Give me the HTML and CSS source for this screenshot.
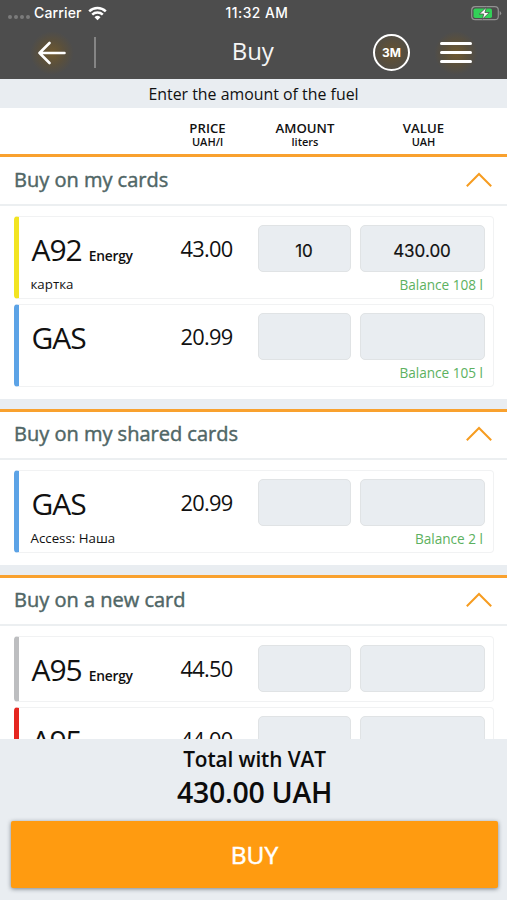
FILE: index.html
```
<!DOCTYPE html>
<html lang="en">
<head>
<meta charset="utf-8">
<title>Buy</title>
<link rel="stylesheet" href="styles.css">
</head>
<body>
<div class="app">
  <header class="top">
    <div class="status">
      <div class="status-left">
        <span class="dots"><i></i><i></i><i></i><i></i></span>
        <span class="carrier">Carrier</span>
        <svg class="wifi" width="19" height="15" viewBox="0 0 19 15" fill="none" stroke="#fff" stroke-width="2.5"><path d="M1.2 5.3a12 12 0 0 1 16.600 0M4.200 8.700a7.700 7.700 0 0 1 10.600 0"/><path d="M9.500 14.200 6.500 11.300a4.300 4.300 0 0 1 6 0z" fill="#fff" stroke="none"/></svg>
      </div>
      <span class="clock">11:32 AM</span>
      <svg class="battery" width="31" height="15" viewBox="0 0 31 15"><rect x=".7" y=".7" width="26.600" height="13" rx="3.500" fill="none" stroke="#929292" stroke-width="1.200"/><rect x="2.500" y="2.500" width="18.500" height="9.500" rx="1.800" fill="#32d158"/><path d="M28.700 5v4.500q1.500-.7 1.500-2.200T28.700 5" fill="#929292"/><path d="M15.500 1.200 8.300 8h4.500l-1.500 5.300L18.300 6.500h-4.400z" fill="#fff" stroke="#4d4d4d" stroke-width=".8"/></svg>
    </div>
    <nav class="bar">
      <div class="back glow"><svg width="28" height="24" viewBox="0 0 28 24" fill="none" stroke="#fff" stroke-width="2.600" stroke-linecap="round" stroke-linejoin="round"><path d="M26.500 12H1.500M11.500 2 1.500 12l10 10"/></svg></div>
      <div class="rule"></div>
      <h1>Buy</h1>
      <div class="badge">3M</div>
      <div class="menu glow"><i></i><i></i><i></i></div>
    </nav>
  </header>
  <div class="hint">Enter the amount of the fuel</div>
  <div class="cols grid">
    <span></span>
    <div>PRICE<small>UAH/l</small></div>
    <div>AMOUNT<small>liters</small></div>
    <div>VALUE<small>UAH</small></div>
  </div>
  <main class="list">
    <section class="group first">
      <div class="group-head"><h2>Buy on my cards</h2><svg class="chev" width="28" height="16" viewBox="0 0 28 16"><path d="M1.800 14.200 14 2l12.200 12.200"/></svg></div>
      <div class="cards">
        <article class="card yellow">
          <div class="grid row"><div class="fuel">A92<b>Energy</b></div><div class="price">43.00</div><div class="field">10</div><div class="field">430.00</div></div>
          <div class="foot"><span>картка</span><span class="balance">Balance 108 l</span></div>
        </article>
        <article class="card blue">
          <div class="grid row"><div class="fuel">GAS</div><div class="price">20.99</div><div class="field"></div><div class="field"></div></div>
          <div class="foot"><span></span><span class="balance">Balance 105 l</span></div>
        </article>
      </div>
    </section>
    <section class="group">
      <div class="group-head"><h2>Buy on my shared cards</h2><svg class="chev" width="28" height="16" viewBox="0 0 28 16"><path d="M1.800 14.200 14 2l12.200 12.200"/></svg></div>
      <div class="cards">
        <article class="card blue">
          <div class="grid row"><div class="fuel">GAS</div><div class="price">20.99</div><div class="field"></div><div class="field"></div></div>
          <div class="foot"><span>Access: Наша</span><span class="balance">Balance 2 l</span></div>
        </article>
      </div>
    </section>
    <section class="group">
      <div class="group-head"><h2>Buy on a new card</h2><svg class="chev" width="28" height="16" viewBox="0 0 28 16"><path d="M1.800 14.200 14 2l12.200 12.200"/></svg></div>
      <div class="cards">
        <article class="card short grey">
          <div class="grid row"><div class="fuel">A95<b>Energy</b></div><div class="price">44.50</div><div class="field"></div><div class="field"></div></div>
        </article>
        <article class="card short red">
          <div class="grid row"><div class="fuel">A95</div><div class="price">44.00</div><div class="field"></div><div class="field"></div></div>
        </article>
      </div>
    </section>
  </main>
  <footer class="total">
    <div class="label">Total with VAT</div>
    <div class="sum">430.00 UAH</div>
    <button class="buy">BUY</button>
  </footer>
</div>
</body>
</html>
```
FILE: styles.css
```
* { box-sizing: border-box; }
body { margin: 0; background: #e9edf1; color: #111; font-family: "Open Sans", "Noto Sans", sans-serif; }
svg { display: block; }
.app { width: 507px; height: 900px; display: flex; flex-direction: column; overflow: hidden; }

.top { height: 79px; flex: none; background: #4d4d4d; color: #fff; }
.status { height: 26px; padding: 0 6px 0 8px; display: grid; grid-template-columns: 1fr auto 1fr; align-items: center; font: 500 14px/26px Inter, sans-serif; }
.status-left { display: flex; align-items: center; }
.dots { display: flex; gap: 2px; margin: 8px 4px 0 0; }
.dots i { width: 4px; height: 4px; border-radius: 50%; background: #7b7b7b; }
.carrier { letter-spacing: .15px; width: 48px; white-space: nowrap; }
.wifi { margin-left: 6px; }
.clock { font-size: 13.8px; letter-spacing: .5px; margin-right: -5px; }
.battery { justify-self: end; margin-right: -1px; }
.bar { height: 53px; display: flex; align-items: center; }
.glow { background: radial-gradient(circle, #70592f 0, rgba(100, 82, 48, .55) 40%, rgba(77, 77, 77, 0) 70%); }
.back { width: 44px; height: 44px; margin-left: 30px; display: grid; place-items: center; }
.rule { width: 1.5px; height: 31px; margin-left: 20px; background: #858585; }
h1 { flex: 1; margin: 0 0 3px; padding-left: 37px; text-align: center; font-size: 24px; line-height: 34px; font-weight: 400; color: #f5f5f5; }
.badge { width: 37px; height: 37px; margin-right: 24px; border: 2px solid #fff; border-radius: 50%; background: radial-gradient(circle, #66522f, #514d45 75%); font: 700 12px/33px Inter, sans-serif; text-align: center; }
.menu { width: 44px; height: 44px; margin-right: 29px; padding: 0 6px; display: flex; flex-direction: column; justify-content: center; gap: 5.5px; }
.menu i { height: 3.500px; border-radius: 2px; background: #fff; }

.hint { height: 29px; flex: none; background: #e9edf1; font-size: 15.9px; line-height: 30px; text-align: center; }
.grid { display: grid; grid-template-columns: 137px 72px 93px 125px; }
.cols { height: 46px; flex: none; padding: 13px 0 0 15px; grid-template-columns: 146px 93px 102px 135px; background: #fff; font-size: 13.2px; line-height: 14px; font-weight: 600; text-align: center; }
.cols small { display: block; font-size: 11px; line-height: 14px; }

.list { height: 585px; flex: none; overflow: hidden; display: flex; flex-direction: column; gap: 10px; }
.group { flex: none; border-top: 3px solid #f9a12e; background: #fff; }
.group-head { height: 48px; padding: 0 14px; display: flex; align-items: center; justify-content: space-between; border-bottom: 2px solid #eceff1; }
.first .group-head { height: 49px; }
.group-head > * { margin-bottom: 3px; }
h2 { margin: 0; font-size: 20px; line-height: 27px; font-weight: 400; color: #506666; -webkit-text-stroke: .45px #506666; white-space: nowrap; }
.chev { margin-bottom: 2px; }
.chev path { fill: none; stroke: #f69c20; stroke-width: 2; }
.cards { padding: 10px 13px 12px 14px; display: flex; flex-direction: column; gap: 5px; }
.card { height: 83px; border: 1px solid #f1f2f3; border-left: 5px solid; border-radius: 4px; }
.card.short { height: 66px; }
.yellow { border-left-color: #f2e422; }
.blue { border-left-color: #5ca3e6; }
.grey { border-left-color: #bdbec0; }
.red { border-left-color: #e52620; }
.row { height: 55px; padding: 8px 0 0 11.5px; column-gap: 9px; }
.fuel { padding-left: 1px; font-size: 30px; line-height: 50px; letter-spacing: -1px; white-space: nowrap; }
.fuel b { margin-left: 7px; font-size: 13.8px; font-weight: 600; letter-spacing: -.25px; }
.price { padding-left: 4px; font-size: 21.8px; line-height: 48px; letter-spacing: -.7px; white-space: nowrap; }
.field { height: 47px; border: 1px solid #e0e3e5; border-radius: 5px; background: #e9edf1; font: 400 17px/50px Inter, sans-serif; -webkit-text-stroke: .2px #111; text-align: center; }
.foot { padding: 2px 10px 0 11.5px; display: flex; justify-content: space-between; font-size: 13.3px; line-height: 21px; }
.balance { font-size: 13.6px; color: #5cb160; }

.total { flex: 1; padding: 6px 9px 0 11px; text-align: center; background: #e9edf1; color: #0c0c0c; }
.label { font-size: 20.8px; line-height: 28px; font-weight: 600; letter-spacing: -.1px; }
.sum { font-size: 28.5px; line-height: 38px; font-weight: 600; letter-spacing: -.3px; }
.buy { display: block; width: 487px; height: 67px; margin-top: 10px; padding: 0; border: 0; border-radius: 2px; background: #ff9b10; box-shadow: 0 1px 4px rgba(50, 60, 70, .6); color: #fff; font: 400 24.5px/68px "Open Sans", sans-serif; -webkit-text-stroke: .5px #fff; }
```
